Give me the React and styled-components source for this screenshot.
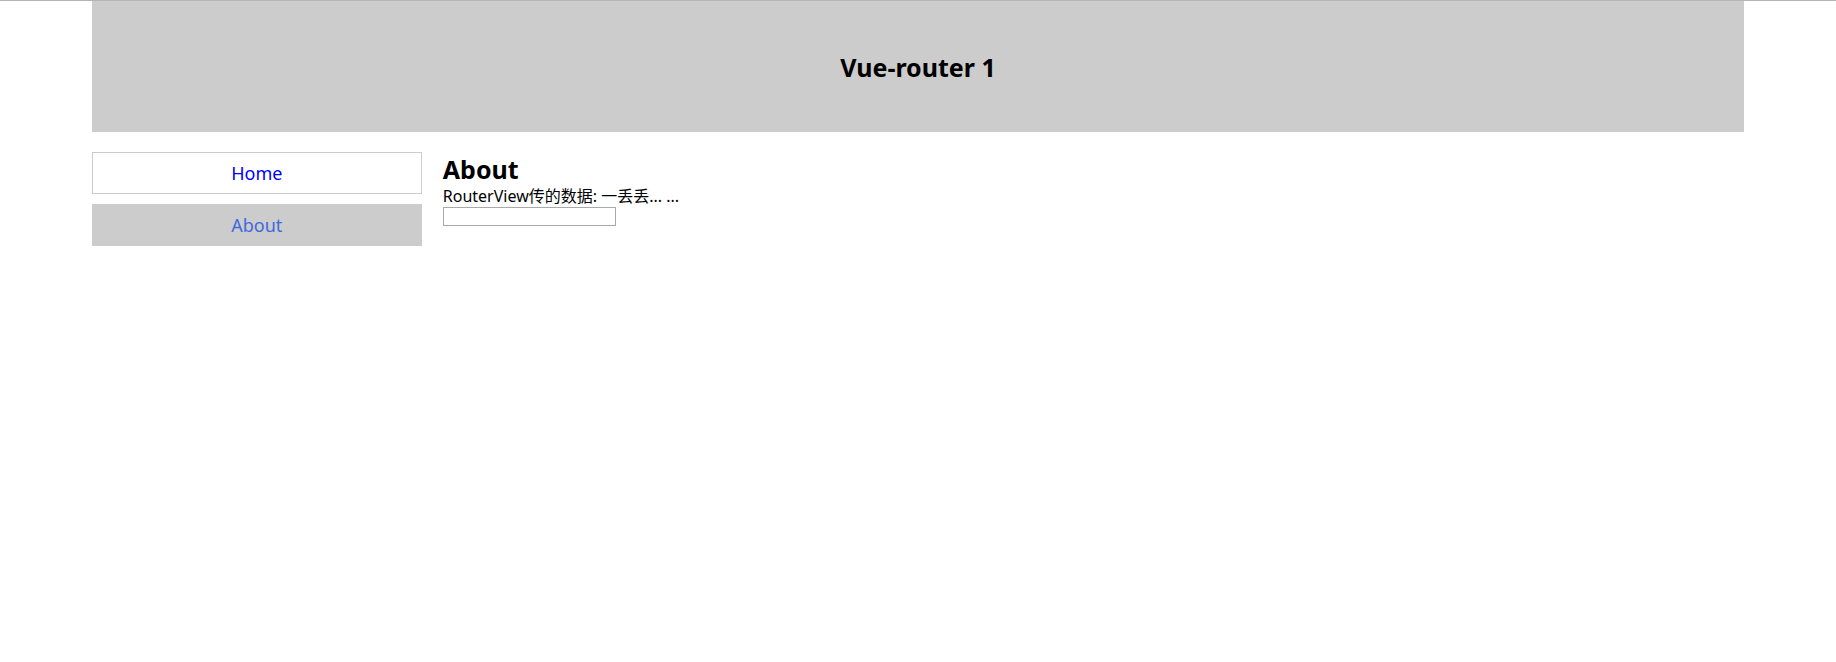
import React from "react";
import styled, { createGlobalStyle } from "styled-components";

const Global = createGlobalStyle`
  html, body { margin: 0; padding: 0; background: #fff; }
  body {
    border-top: 1px solid #b4b4b4;
    font-family: "Noto Sans", "Noto Sans CJK SC", sans-serif;
    color: #000;
  }
`;

const Page = styled.div`
  width: 90%;
  margin: 0 auto;
`;

const Header = styled.header`
  height: 131px;
  background: #ccc;
  display: flex;
  align-items: center;
  justify-content: center;
`;

const Title = styled.h1`
  margin: 0;
  font-size: 25px;
  font-weight: 700;
`;

const Main = styled.div`
  display: flex;
  align-items: flex-start;
  gap: 21px;
  margin-top: 20px;
`;

const Nav = styled.nav`
  width: 330px;
  flex-shrink: 0;
  display: flex;
  flex-direction: column;
  gap: 10px;
`;

const NavLink = styled.a`
  box-sizing: border-box;
  height: 42px;
  display: flex;
  align-items: center;
  justify-content: center;
  font-size: 18px;
  text-decoration: none;
  border: 1px solid #ccc;
  background: ${(p) => (p.$active ? "#ccc" : "#fff")};
  color: ${(p) => (p.$active ? "#4169e1" : "#0000ff")};
`;

const Content = styled.section`
  display: flex;
  flex-direction: column;
  align-items: flex-start;
`;

const Heading = styled.h2`
  margin: 0;
  font-size: 25px;
  line-height: 34px;
  font-weight: 700;
`;

const Line = styled.div`
  font-size: 16px;
  line-height: 21px;
`;

const Field = styled.input`
  box-sizing: border-box;
  width: 173px;
  height: 19px;
  border: 1px solid #a9a9a9;
  padding: 0 2px;
  margin: 0;
  outline: none;
`;

export default function App() {
  return (
    <>
      <Global />
      <Page>
        <Header>
          <Title>Vue-router 1</Title>
        </Header>
        <Main>
          <Nav>
            <NavLink href="#/">Home</NavLink>
            <NavLink href="#/about" $active>About</NavLink>
          </Nav>
          <Content>
            <Heading>About</Heading>
            <Line>RouterView传的数据: 一丢丢... ...</Line>
            <Field type="text" />
          </Content>
        </Main>
      </Page>
    </>
  );
}
